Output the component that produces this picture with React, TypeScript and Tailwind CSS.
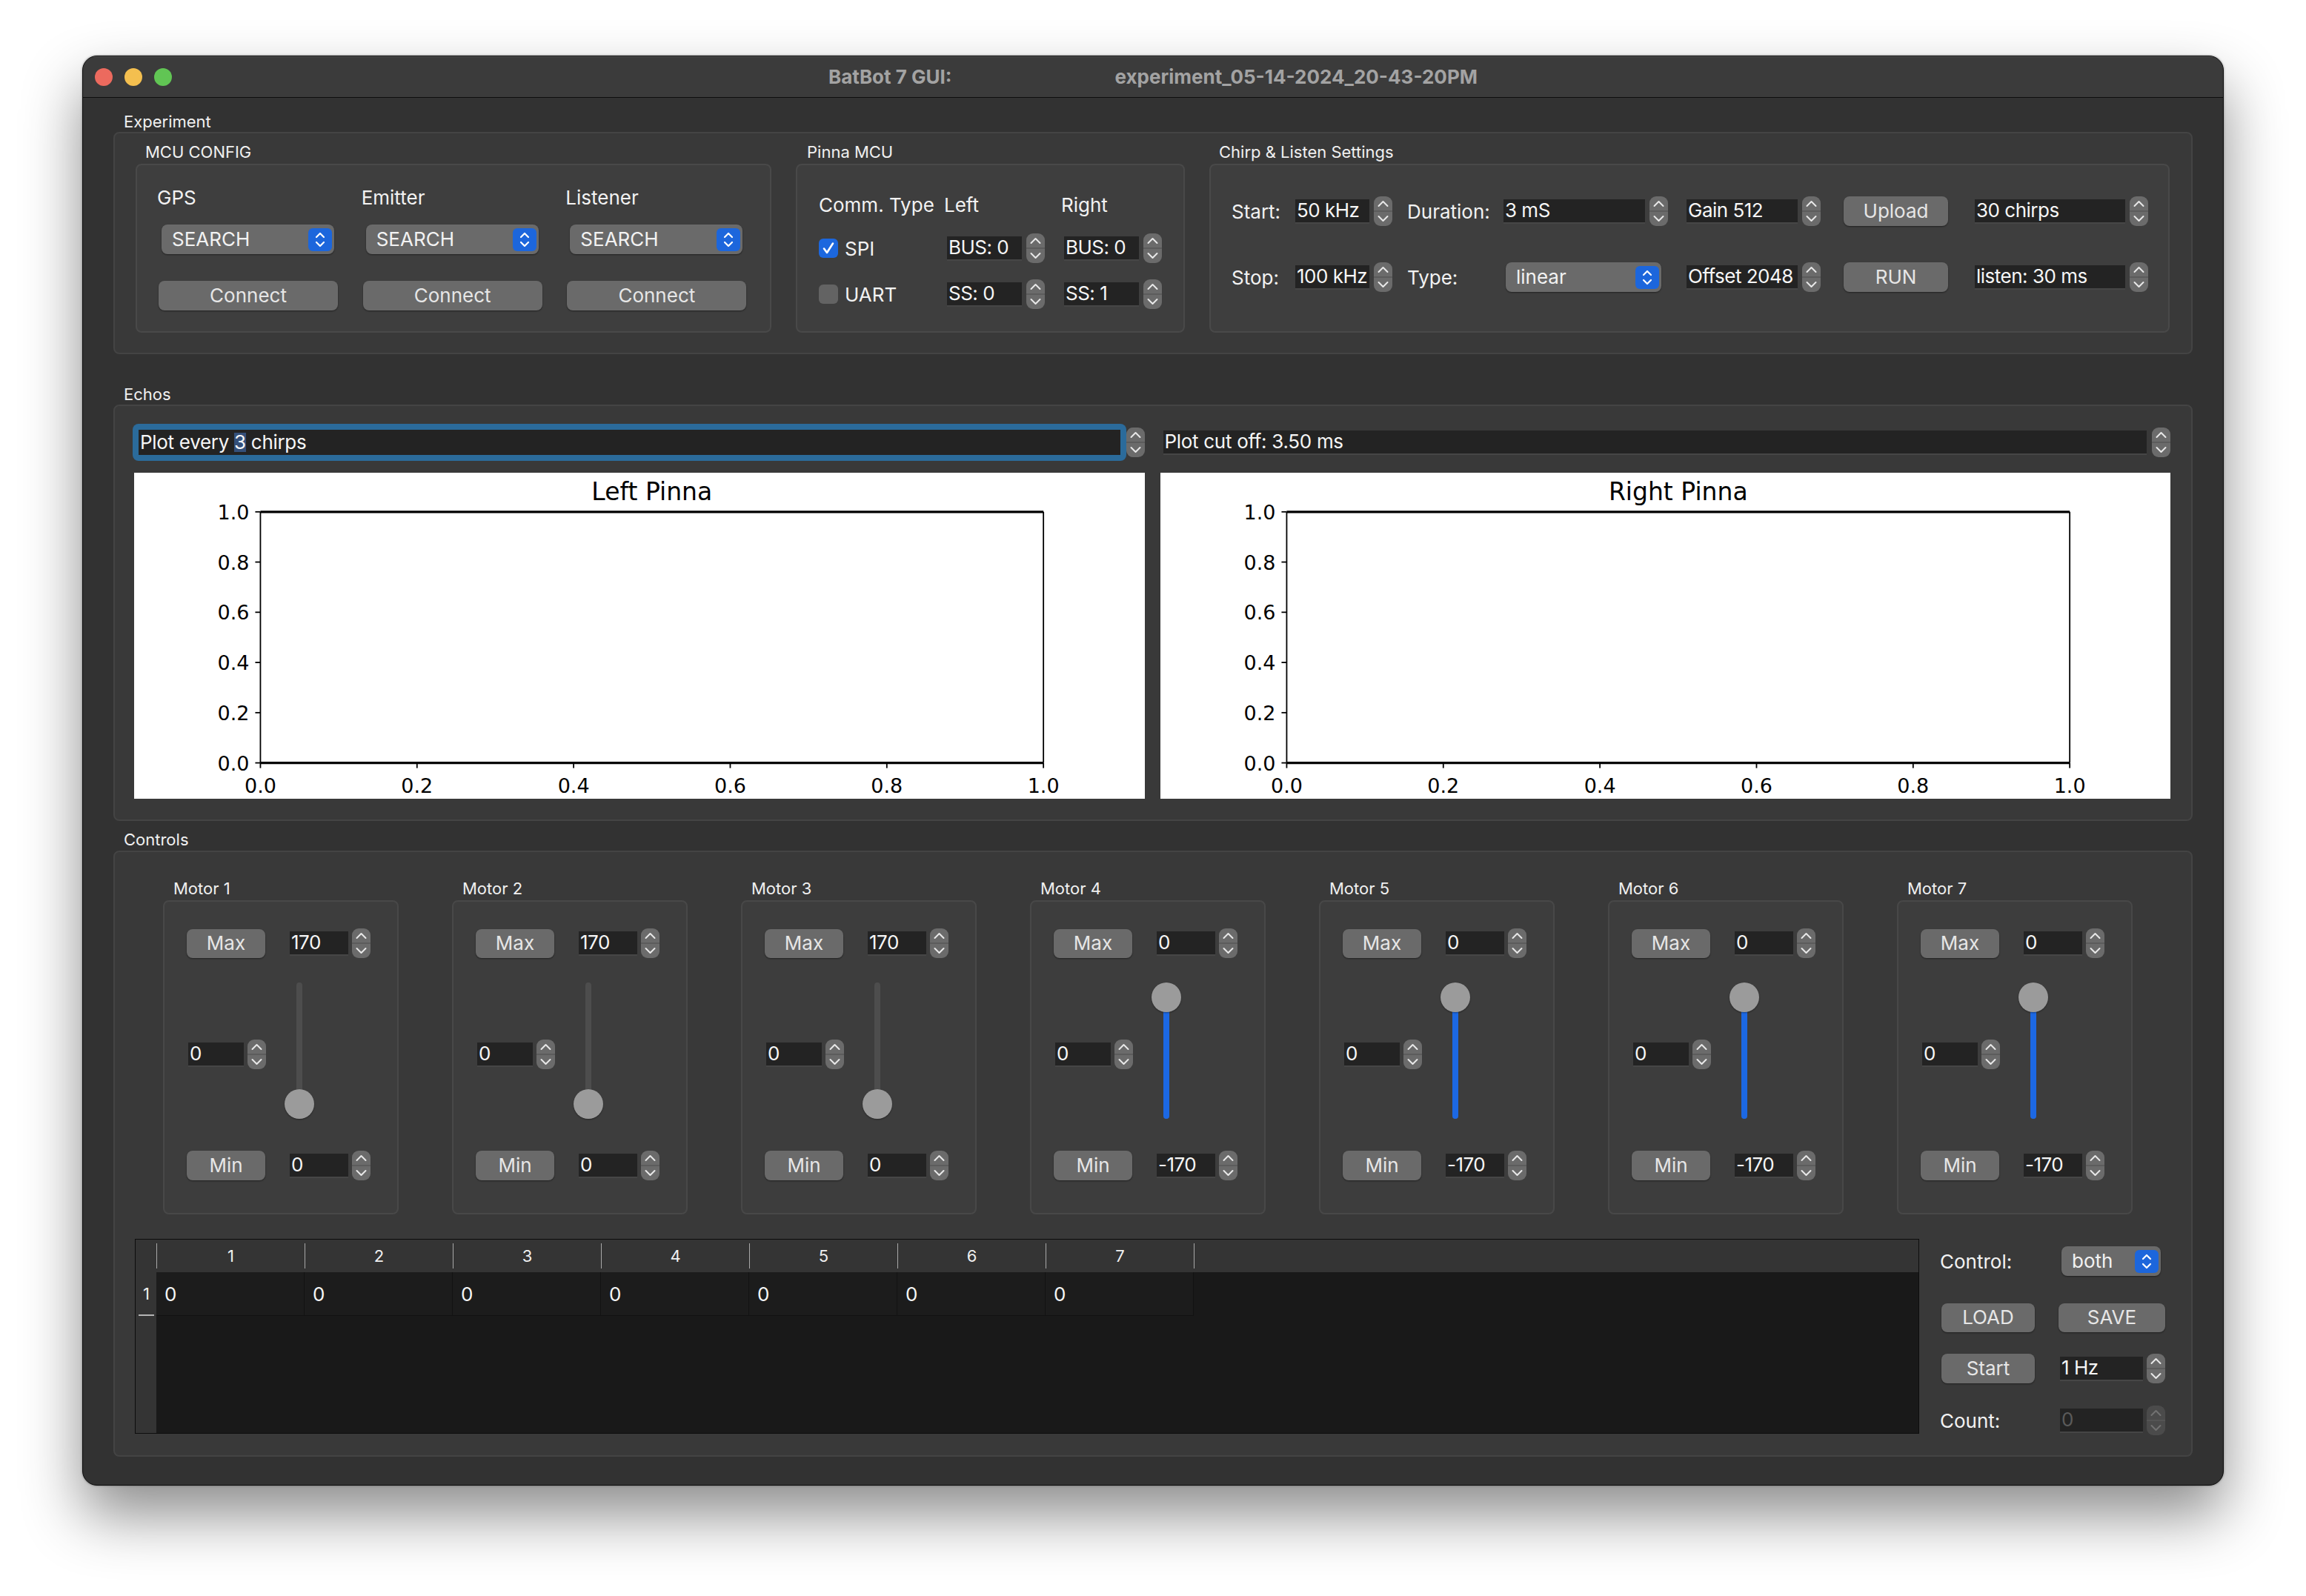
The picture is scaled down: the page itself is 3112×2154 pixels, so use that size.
import React from "react";

const FONT = "font-[family-name:Inter,'Noto_Sans','Liberation_Sans',sans-serif]";

function StepperIcon({ disabled = false }: { disabled?: boolean }) {
  const fg = disabled ? "#727272" : "#e9e9e9";
  const bg = disabled ? "#4b4b4b" : "#6b6b6b";
  return (
    <svg width="25" height="40" viewBox="0 0 25 40" className="block shrink-0">
      <rect x="0" y="0" width="25" height="40" rx="9" fill={bg} />
      <line x1="0" y1="20" x2="25" y2="20" stroke="#575757" strokeWidth="1.5" />
      <path d="M6.5 13 L12.5 7 L18.5 13" fill="none" stroke={fg} strokeWidth="2" strokeLinecap="round" strokeLinejoin="round" />
      <path d="M6.5 27 L12.5 33 L18.5 27" fill="none" stroke={fg} strokeWidth="2" strokeLinecap="round" strokeLinejoin="round" />
    </svg>
  );
}

function BlueArrows() {
  return (
    <svg width="32" height="31" viewBox="0 0 32 31" className="block shrink-0">
      <rect x="0" y="0" width="32" height="31" rx="6" fill="#1c66dc" />
      <path d="M11 12 L16 7 L21 12" fill="none" stroke="#ffffff" strokeWidth="2.2" strokeLinecap="round" strokeLinejoin="round" />
      <path d="M11 19 L16 24 L21 19" fill="none" stroke="#ffffff" strokeWidth="2.2" strokeLinecap="round" strokeLinejoin="round" />
    </svg>
  );
}

function Spin({ w, value, gap = "ml-[6px]", disabled = false }: { w: string; value: string; gap?: string; disabled?: boolean }) {
  return (
    <div className="flex items-center">
      <div
        className={`${w} h-[33px] bg-[#232323] border-b-[2px] border-[#464646] flex items-center pl-[2px] overflow-hidden whitespace-nowrap text-[26px] leading-none tracking-[-0.5px] ${disabled ? "text-[#5a5a5a]" : "text-[#f6f6f6]"}`}
      >
        {value}
      </div>
      <div className={gap}>
        <StepperIcon disabled={disabled} />
      </div>
    </div>
  );
}

function Btn({ cls, children }: { cls: string; children: React.ReactNode }) {
  return (
    <div
      className={`${cls} shrink-0 rounded-[8px] bg-[#6a6a6a] shadow-[0_1px_2px_rgba(0,0,0,0.45)] flex items-center justify-center text-[26px] leading-none text-[#e6e6e6]`}
    >
      {children}
    </div>
  );
}

function Combo({ cls, label }: { cls: string; label: string }) {
  return (
    <div
      className={`${cls} h-[40px] shrink-0 rounded-[8px] bg-[#6a6a6a] shadow-[0_1px_2px_rgba(0,0,0,0.45)] flex items-center justify-between pl-[14px] pr-[3px] text-[26px] leading-none text-[#f2f2f2]`}
    >
      <span>{label}</span>
      <BlueArrows />
    </div>
  );
}

function Checkbox({ checked }: { checked: boolean }) {
  return (
    <svg width="26" height="26" viewBox="0 0 26 26" className="block shrink-0">
      <rect x="0" y="0" width="26" height="26" rx="6" fill={checked ? "#1c67de" : "#636363"} />
      {checked && (
        <path d="M7 13.5 L11 19 L19 6.5" fill="none" stroke="#ffffff" strokeWidth="2.6" strokeLinecap="round" strokeLinejoin="round" />
      )}
    </svg>
  );
}

function VSlider({ top }: { top: boolean }) {
  return (
    <div className="relative w-[40px] h-[184px]">
      <div className="absolute left-[16px] top-0 bottom-0 w-[8px] rounded-full bg-[#4d4d4d]" />
      {top && <div className="absolute left-[16px] top-[20px] bottom-0 w-[8px] rounded-full bg-[#1c68e3]" />}
      <div
        className={`absolute left-0 ${top ? "top-0" : "bottom-0"} w-[40px] h-[40px] rounded-full bg-[#9b9b9b] shadow-[0_1px_2px_rgba(0,0,0,0.4)]`}
      />
    </div>
  );
}

function Motor({ n, max, min, top }: { n: number; max: string; min: string; top: boolean }) {
  return (
    <div className="w-[318px] flex flex-col shrink-0">
      <div className="h-[26px] leading-[26px] pl-[14px] text-[22px] text-[#f0f0f0]">Motor {n}</div>
      <div className="mt-[3px] h-[424px] bg-[#3d3d3d] border-[2px] border-[#484848] rounded-[8px] flex flex-col pt-[36px]">
        <div className="h-[40px] flex items-center">
          <Btn cls="ml-[30px] w-[106px] h-[39px]">Max</Btn>
          <div className="ml-[33px]">
            <Spin w="w-[79px]" value={max} gap="ml-[5px]" />
          </div>
        </div>
        <div className="h-[260px] flex">
          <div className="ml-[32px] self-center">
            <Spin w="w-[75px]" value="0" gap="ml-[5px]" />
          </div>
          <div className="ml-[25px] mt-[33px]">
            <VSlider top={top} />
          </div>
        </div>
        <div className="h-[40px] flex items-center">
          <Btn cls="ml-[30px] w-[106px] h-[40px]">Min</Btn>
          <div className="ml-[33px]">
            <Spin w="w-[79px]" value={min} gap="ml-[5px]" />
          </div>
        </div>
      </div>
    </div>
  );
}

function Plot({ title }: { title: string }) {
  const W = 1364;
  const H = 440;
  const x0 = 170.5;
  const x1 = 1227.6;
  const y0 = 52.8;
  const y1 = 391.6;
  const ticks = [0, 0.2, 0.4, 0.6, 0.8, 1.0];
  const ff = "DejaVu Sans, sans-serif";
  return (
    <svg viewBox={`0 0 ${W} ${H}`} preserveAspectRatio="none" className="block w-full h-full bg-white">
      <text x={(x0 + x1) / 2} y={37} textAnchor="middle" fontSize={33} fontFamily={ff} fill="#000">
        {title}
      </text>
      <line x1={x0} y1={y0} x2={x0} y2={y1} stroke="#000" strokeWidth={1.8} />
      <line x1={x1} y1={y0} x2={x1} y2={y1} stroke="#000" strokeWidth={1.8} />
      <line x1={x0} y1={y0} x2={x1} y2={y0} stroke="#000" strokeWidth={3.2} />
      <line x1={x0} y1={y1} x2={x1} y2={y1} stroke="#000" strokeWidth={3.2} />
      {ticks.map((t) => {
        const y = y1 - t * (y1 - y0);
        const x = x0 + t * (x1 - x0);
        return (
          <g key={t}>
            <line x1={x0 - 7} y1={y} x2={x0} y2={y} stroke="#000" strokeWidth={1.8} />
            <text x={x0 - 15} y={y + 10} textAnchor="end" fontSize={27} fontFamily={ff} fill="#000">
              {t.toFixed(1)}
            </text>
            <line x1={x} y1={y1} x2={x} y2={y1 + 7} stroke="#000" strokeWidth={1.8} />
            <text x={x} y={y1 + 40} textAnchor="middle" fontSize={27} fontFamily={ff} fill="#000">
              {t.toFixed(1)}
            </text>
          </g>
        );
      })}
    </svg>
  );
}

function GroupLabel({ children }: { children: React.ReactNode }) {
  return <div className="h-[26px] leading-[26px] pl-[14px] text-[22px] text-[#f0f0f0]">{children}</div>;
}

export default function App() {
  const motors = [
    { n: 1, max: "170", min: "0", top: false },
    { n: 2, max: "170", min: "0", top: false },
    { n: 3, max: "170", min: "0", top: false },
    { n: 4, max: "0", min: "-170", top: true },
    { n: 5, max: "0", min: "-170", top: true },
    { n: 6, max: "0", min: "-170", top: true },
    { n: 7, max: "0", min: "-170", top: true },
  ];
  const cols = [1, 2, 3, 4, 5, 6, 7];

  return (
    <div className={`w-[3112px] h-[2154px] bg-white overflow-hidden pt-[75px] pl-[111px] ${FONT}`}>
      <div className="w-[2890px] h-[1930px] rounded-[20px] overflow-hidden bg-[#323232] border border-[#0c0c0c] shadow-[0_40px_80px_rgba(0,0,0,0.45),0_0_3px_rgba(0,0,0,0.4)] flex flex-col">
        {/* Title bar */}
        <div className="h-[56px] shrink-0 bg-[#3b3b3b] border-b border-[#0e0e0e] shadow-[inset_0_1px_0_rgba(255,255,255,0.12)] grid grid-cols-[1fr_auto_1fr] items-center">
          <div className="flex items-center pl-[16px] gap-[16px]">
            <div className="w-[24px] h-[24px] rounded-full bg-[#ec6a5e]" />
            <div className="w-[24px] h-[24px] rounded-full bg-[#f4bf4f]" />
            <div className="w-[24px] h-[24px] rounded-full bg-[#61c554]" />
          </div>
          <div className="flex items-center text-[26px] font-bold text-[#a3a3a3] whitespace-nowrap">
            <span>BatBot 7 GUI:</span>
            <span className="ml-[220px]">experiment_05-14-2024_20-43-20PM</span>
          </div>
          <div />
        </div>

        {/* Content */}
        <div className="flex flex-col px-[41px]">
          {/* Experiment */}
          <div className="mt-[19px]">
            <GroupLabel>Experiment</GroupLabel>
          </div>
          <div className="mt-[1px] h-[300px] bg-[#393939] border-[2px] border-[#444444] rounded-[8px] flex pt-[12px] pl-[28px] gap-[33px]">
            {/* MCU CONFIG */}
            <div className="flex flex-col">
              <div className="h-[26px] leading-[26px] pl-[13px] text-[22px] text-[#f0f0f0]">MCU CONFIG</div>
              <div className="mt-[3px] w-[858px] h-[228px] bg-[#3e3e3e] border-[2px] border-[#494949] rounded-[8px] flex pl-[27px]">
                {["GPS", "Emitter", "Listener"].map((l) => (
                  <div key={l} className="w-[276px] flex flex-col pt-[29px]">
                    <div className="h-[30px] leading-[30px] text-[26px] text-[#f2f2f2]">{l}</div>
                    <div className="mt-[21px] ml-[6px]">
                      <Combo cls="w-[233px]" label="SEARCH" />
                    </div>
                    <div className="mt-[36px] ml-[2px]">
                      <Btn cls="w-[242px] h-[40px]">Connect</Btn>
                    </div>
                  </div>
                ))}
              </div>
            </div>

            {/* Pinna MCU */}
            <div className="flex flex-col">
              <div className="h-[26px] leading-[26px] pl-[15px] text-[22px] text-[#f0f0f0]">Pinna MCU</div>
              <div className="mt-[3px] w-[525px] h-[228px] bg-[#3e3e3e] border-[2px] border-[#494949] rounded-[8px] flex flex-col pl-[29px] pt-[38px]">
                <div className="h-[30px] flex items-center text-[26px] text-[#f2f2f2]">
                  <div className="w-[169px]">Comm. Type</div>
                  <div className="w-[158px]">Left</div>
                  <div>Right</div>
                </div>
                <div className="mt-[24px] h-[40px] flex items-center">
                  <div className="w-[173px] flex items-center text-[26px] text-[#f2f2f2]">
                    <Checkbox checked={true} />
                    <span className="ml-[9px]">SPI</span>
                  </div>
                  <Spin w="w-[101px]" value="BUS: 0" />
                  <div className="ml-[26px]">
                    <Spin w="w-[101px]" value="BUS: 0" />
                  </div>
                </div>
                <div className="mt-[22px] h-[40px] flex items-center">
                  <div className="w-[173px] flex items-center text-[26px] text-[#f2f2f2]">
                    <Checkbox checked={false} />
                    <span className="ml-[9px]">UART</span>
                  </div>
                  <Spin w="w-[101px]" value="SS: 0" />
                  <div className="ml-[26px]">
                    <Spin w="w-[101px]" value="SS: 1" />
                  </div>
                </div>
              </div>
            </div>

            {/* Chirp & Listen */}
            <div className="flex flex-col">
              <div className="h-[26px] leading-[26px] pl-[13px] text-[22px] text-[#f0f0f0]">Chirp &amp; Listen Settings</div>
              <div className="mt-[3px] w-[1296px] h-[228px] bg-[#3e3e3e] border-[2px] border-[#494949] rounded-[8px] flex flex-col pl-[28px] pt-[42px]">
                <div className="h-[40px] flex items-center text-[26px] text-[#f2f2f2]">
                  <div className="w-[86px]">Start:</div>
                  <Spin w="w-[100px]" value="50 kHz" />
                  <div className="ml-[20px] w-[130px]">Duration:</div>
                  <Spin w="w-[191px]" value="3 mS" />
                  <div className="ml-[25px]">
                    <Spin w="w-[150px]" value="Gain 512" />
                  </div>
                  <Btn cls="ml-[31px] w-[141px] h-[40px]">Upload</Btn>
                  <div className="ml-[36px]">
                    <Spin w="w-[203px]" value="30 chirps" />
                  </div>
                </div>
                <div className="mt-[49px] h-[40px] flex items-center text-[26px] text-[#f2f2f2]">
                  <div className="w-[86px]">Stop:</div>
                  <Spin w="w-[100px]" value="100 kHz" />
                  <div className="ml-[20px] w-[130px]">Type:</div>
                  <div className="ml-[3px] mr-[9px]">
                    <Combo cls="w-[210px]" label="linear" />
                  </div>
                  <div className="ml-[25px]">
                    <Spin w="w-[150px]" value="Offset 2048" />
                  </div>
                  <Btn cls="ml-[31px] w-[141px] h-[40px]">RUN</Btn>
                  <div className="ml-[36px]">
                    <Spin w="w-[203px]" value="listen: 30 ms" />
                  </div>
                </div>
              </div>
            </div>
          </div>

          {/* Echos */}
          <div className="mt-[41px]">
            <GroupLabel>Echos</GroupLabel>
          </div>
          <div className="mt-[1px] h-[562px] bg-[#393939] border-[2px] border-[#444444] rounded-[8px] flex gap-[21px] pt-[24px] pl-[26px] pr-[28px]">
            <div className="flex-1 flex flex-col">
              <div className="h-[50px] flex items-center">
                <div className="ml-[-2px] flex-1 rounded-[8px] bg-[#2b6b9b] p-[8px]">
                  <div className="h-[34px] bg-[#232323] flex items-center pl-[2px] text-[26px] leading-none tracking-[-0.3px] text-[#f6f6f6] whitespace-nowrap">
                    <span>Plot every&nbsp;</span>
                    <span className="bg-[#34507a]">3</span>
                    <span>&nbsp;chirps</span>
                  </div>
                </div>
                <StepperIcon />
              </div>
              <div className="mt-[16px] h-[440px]">
                <Plot title="Left Pinna" />
              </div>
            </div>
            <div className="flex-1 flex flex-col">
              <div className="h-[50px] flex items-center">
                <div className="ml-[4px] flex-1 h-[33px] bg-[#232323] border-b-[2px] border-[#464646] flex items-center pl-[2px] text-[26px] leading-none tracking-[-0.3px] text-[#f6f6f6] whitespace-nowrap">
                  Plot cut off: 3.50 ms
                </div>
                <div className="ml-[7px]">
                  <StepperIcon />
                </div>
              </div>
              <div className="mt-[16px] h-[440px]">
                <Plot title="Right Pinna" />
              </div>
            </div>
          </div>

          {/* Controls */}
          <div className="mt-[12px]">
            <GroupLabel>Controls</GroupLabel>
          </div>
          <div className="mt-[2px] h-[818px] bg-[#393939] border-[2px] border-[#444444] rounded-[8px] flex flex-col pt-[36px]">
            <div className="flex gap-[72px] pl-[65px]">
              {motors.map((m) => (
                <Motor key={m.n} n={m.n} max={m.max} min={m.min} top={m.top} />
              ))}
            </div>

            <div className="mt-[33px] flex pl-[27px]">
              {/* Table */}
              <div className="w-[2408px] h-[263px] bg-[#191919] border border-[#0d0d0d] flex flex-col shrink-0">
                <div className="h-[44px] bg-[#343434] flex items-center shrink-0">
                  <div className="w-[28px]" />
                  {cols.map((c) => (
                    <div key={c} className="w-[200px] h-full flex items-center">
                      <div className="w-[1px] h-[34px] bg-[#a8a8a8]" />
                      <div className="flex-1 text-center text-[22px] text-[#f0f0f0]">{c}</div>
                    </div>
                  ))}
                  <div className="w-[1px] h-[34px] bg-[#a8a8a8]" />
                </div>
                <div className="flex-1 flex">
                  <div className="w-[28px] bg-[#343434] flex flex-col">
                    <div className="h-[59px] flex items-center pl-[10px] text-[22px] text-[#f0f0f0]">1</div>
                    <div className="ml-[4px] w-[21px] h-[2px] bg-[#b5b5b5] -mt-[2px]" />
                  </div>
                  <div className="flex-1 flex flex-col">
                    <div className="h-[59px] flex">
                      {cols.map((c) => (
                        <div
                          key={c}
                          className="w-[200px] h-full bg-[#1c1c1c] border-r border-b border-[#121212] flex items-center pl-[11px] text-[26px] text-[#f6f6f6]"
                        >
                          0
                        </div>
                      ))}
                    </div>
                  </div>
                </div>
              </div>

              {/* Right panel */}
              <div className="ml-[28px] w-[305px] flex flex-col text-[26px] text-[#f2f2f2]">
                <div className="mt-[10px] h-[40px] flex items-center">
                  <div className="w-[164px]">Control:</div>
                  <Combo cls="w-[134px]" label="both" />
                </div>
                <div className="mt-[36px] h-[40px] flex items-center">
                  <Btn cls="ml-[2px] w-[126px] h-[39px]">LOAD</Btn>
                  <Btn cls="ml-[32px] w-[144px] h-[39px]">SAVE</Btn>
                </div>
                <div className="mt-[29px] h-[40px] flex items-center">
                  <Btn cls="ml-[2px] w-[126px] h-[40px]">Start</Btn>
                  <div className="ml-[34px]">
                    <Spin w="w-[112px]" value="1 Hz" gap="ml-[5px]" />
                  </div>
                </div>
                <div className="mt-[30px] h-[40px] flex items-center">
                  <div className="w-[162px]">Count:</div>
                  <Spin w="w-[112px]" value="0" gap="ml-[5px]" disabled={true} />
                </div>
              </div>
            </div>
          </div>
        </div>
      </div>
    </div>
  );
}
